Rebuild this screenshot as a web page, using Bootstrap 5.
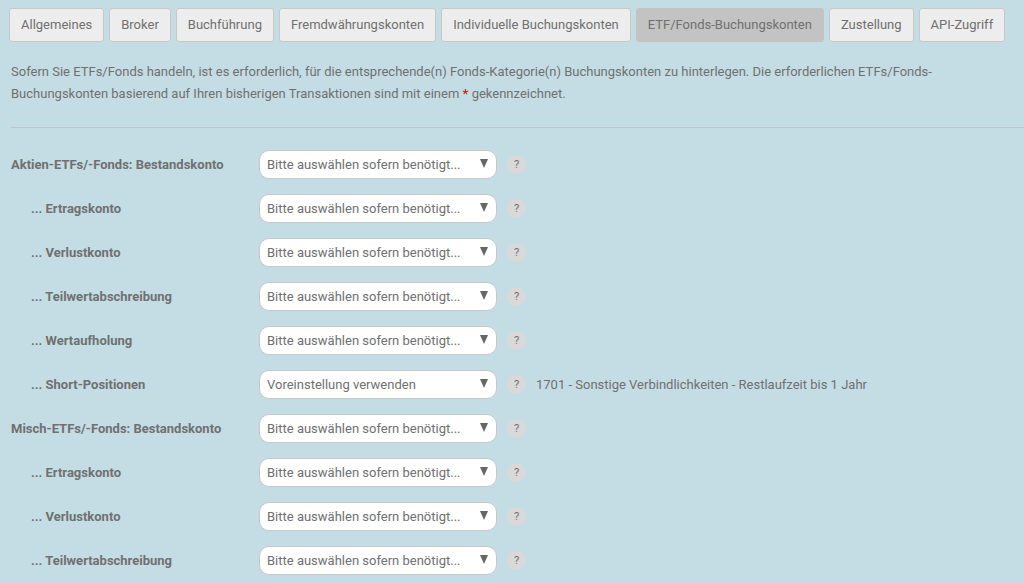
<!DOCTYPE html>
<html lang="de">
<head>
<meta charset="utf-8">
<meta name="viewport" content="width=device-width, initial-scale=1">
<title>ETF/Fonds-Buchungskonten</title>
<link rel="stylesheet" href="https://cdn.jsdelivr.net/npm/bootstrap@5.3.0/dist/css/bootstrap.min.css">
<style>
body { background: #c4dde4; color: #707070; font-family: Roboto, "Liberation Sans", sans-serif; font-size: 13px; line-height: 22px; }
.tabs { gap: 5px; padding: 8px 9px 0; }
.tabs .btn { --bs-btn-font-size: 13px; --bs-btn-line-height: 22px; --bs-btn-padding-x: 11px; --bs-btn-padding-y: 5px; --bs-btn-border-radius: 3px; --bs-btn-color: #707070; --bs-btn-bg: #ededed; --bs-btn-border-color: #c8c8c8; --bs-btn-hover-bg: #e0e0e0; --bs-btn-active-color: #707070; --bs-btn-active-bg: #c3c3c3; --bs-btn-active-border-color: #c3c3c3; }
.content { padding: 19px 0 9px 11px; }
.intro { padding-right: 60px; margin-bottom: 22px; }
.star { color: #f0141e; }
.rule { margin: 0 0 22px; border-color: #bfc5c7; opacity: 1; }
.accounts { display: grid; gap: 15px; }
.account { gap: 10px; }
.account label { width: 238px; font-weight: 700; }
.account .sub { padding-left: 20px; }
.account .form-select { width: 238px; height: 29px; padding: 0 28px 0 7px; font-size: 13px; line-height: 22px; color: #707070; border-color: #c8c8c8; border-radius: 10px; background-color: #fff; background-image: url("data:image/svg+xml,%3Csvg xmlns='http://www.w3.org/2000/svg' viewBox='0 0 8 9'%3E%3Cpath d='M0 0h8L4 9z' fill='%23666'/%3E%3C/svg%3E"); background-size: 8px 9px; background-position: right 8px top 8px; }
.help { width: 19px; height: 19px; font-size: 11px; line-height: 19px; background: #d9d9d9; color: #707070; }
</style>
</head>
<body>
<nav class="tabs d-flex flex-wrap" aria-label="Einstellungen">
  <button type="button" class="btn">Allgemeines</button>
  <button type="button" class="btn">Broker</button>
  <button type="button" class="btn">Buchführung</button>
  <button type="button" class="btn">Fremdwährungskonten</button>
  <button type="button" class="btn">Individuelle Buchungskonten</button>
  <button type="button" class="btn active" aria-current="page">ETF/Fonds-Buchungskonten</button>
  <button type="button" class="btn">Zustellung</button>
  <button type="button" class="btn">API-Zugriff</button>
</nav>
<main class="content">
  <p class="intro">Sofern Sie ETFs/Fonds handeln, ist es erforderlich, für die entsprechende(n) Fonds-Kategorie(n) Buchungskonten zu hinterlegen. Die erforderlichen ETFs/Fonds-Buchungskonten basierend auf Ihren bisherigen Transaktionen sind mit einem <b class="star">*</b> gekennzeichnet.</p>
  <hr class="rule">
  <form class="accounts">
    <div class="account d-flex align-items-center">
      <label for="a1">Aktien-ETFs/-Fonds: Bestandskonto</label>
      <select id="a1" class="form-select"><option>Bitte auswählen sofern benötigt...</option></select>
      <button type="button" class="help border-0 p-0 rounded-circle">?</button>
    </div>
    <div class="account d-flex align-items-center">
      <label for="a2" class="sub">... Ertragskonto</label>
      <select id="a2" class="form-select"><option>Bitte auswählen sofern benötigt...</option></select>
      <button type="button" class="help border-0 p-0 rounded-circle">?</button>
    </div>
    <div class="account d-flex align-items-center">
      <label for="a3" class="sub">... Verlustkonto</label>
      <select id="a3" class="form-select"><option>Bitte auswählen sofern benötigt...</option></select>
      <button type="button" class="help border-0 p-0 rounded-circle">?</button>
    </div>
    <div class="account d-flex align-items-center">
      <label for="a4" class="sub">... Teilwertabschreibung</label>
      <select id="a4" class="form-select"><option>Bitte auswählen sofern benötigt...</option></select>
      <button type="button" class="help border-0 p-0 rounded-circle">?</button>
    </div>
    <div class="account d-flex align-items-center">
      <label for="a5" class="sub">... Wertaufholung</label>
      <select id="a5" class="form-select"><option>Bitte auswählen sofern benötigt...</option></select>
      <button type="button" class="help border-0 p-0 rounded-circle">?</button>
    </div>
    <div class="account d-flex align-items-center">
      <label for="a6" class="sub">... Short-Positionen</label>
      <select id="a6" class="form-select"><option>Voreinstellung verwenden</option></select>
      <button type="button" class="help border-0 p-0 rounded-circle">?</button>
      <span>1701 - Sonstige Verbindlichkeiten - Restlaufzeit bis 1 Jahr</span>
    </div>
    <div class="account d-flex align-items-center">
      <label for="m1">Misch-ETFs/-Fonds: Bestandskonto</label>
      <select id="m1" class="form-select"><option>Bitte auswählen sofern benötigt...</option></select>
      <button type="button" class="help border-0 p-0 rounded-circle">?</button>
    </div>
    <div class="account d-flex align-items-center">
      <label for="m2" class="sub">... Ertragskonto</label>
      <select id="m2" class="form-select"><option>Bitte auswählen sofern benötigt...</option></select>
      <button type="button" class="help border-0 p-0 rounded-circle">?</button>
    </div>
    <div class="account d-flex align-items-center">
      <label for="m3" class="sub">... Verlustkonto</label>
      <select id="m3" class="form-select"><option>Bitte auswählen sofern benötigt...</option></select>
      <button type="button" class="help border-0 p-0 rounded-circle">?</button>
    </div>
    <div class="account d-flex align-items-center">
      <label for="m4" class="sub">... Teilwertabschreibung</label>
      <select id="m4" class="form-select"><option>Bitte auswählen sofern benötigt...</option></select>
      <button type="button" class="help border-0 p-0 rounded-circle">?</button>
    </div>
  </form>
</main>
<script src="https://cdn.jsdelivr.net/npm/bootstrap@5.3.0/dist/js/bootstrap.bundle.min.js"></script>
</body>
</html>
